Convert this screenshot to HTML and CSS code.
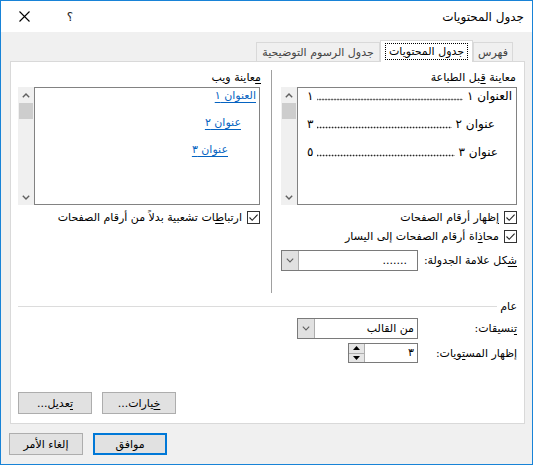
FILE: index.html
```html
<!DOCTYPE html>
<html lang="ar" dir="rtl">
<head>
<meta charset="utf-8">
<title>جدول المحتويات</title>
<link rel="stylesheet" href="styles.css">
</head>
<body>
<div class="window">
  <div class="titlebar">
    <div class="title">جدول المحتويات</div>
    <div class="tb-buttons">
      <div class="tb-btn help">؟</div>
      <div class="tb-btn close">
        <svg width="11" height="11" viewBox="0 0 11 11"><path d="M0.5 0.5 L10.5 10.5 M10.5 0.5 L0.5 10.5" stroke="#000" stroke-width="1.1" fill="none"/></svg>
      </div>
    </div>
  </div>
  <div class="client">
    <div class="tabs">
      <div class="tab tab-index">فهرس</div>
      <div class="tab tab-active"><span class="focus">جدول المحتويات</span></div>
      <div class="tab tab-figures">جدول الرسوم التوضيحية</div>
    </div>
    <div class="panel">
      <div class="columns">
        <div class="col col-print">
          <div class="label">معاينة <u>ق</u>بل الطباعة</div>
          <div class="preview">
            <div class="listbox print-list">
              <div class="toc-row l1"><span class="t">العنوان ١</span><span class="dots"></span><span class="n">١</span></div>
              <div class="toc-row l2"><span class="t">عنوان ٢</span><span class="dots"></span><span class="n">٣</span></div>
              <div class="toc-row l3"><span class="t">عنوان ٣</span><span class="dots"></span><span class="n">٥</span></div>
            </div>
            <div class="scrollbar">
              <div class="sb-arrow"><svg width="8" height="5" viewBox="0 0 8 5"><path d="M0.8 4.3 L4 1.1 L7.2 4.3" stroke="#606060" stroke-width="1.4" fill="none"/></svg></div>
              <div class="sb-thumb"></div>
              <div class="sb-track"></div>
              <div class="sb-arrow"><svg width="8" height="5" viewBox="0 0 8 5"><path d="M0.8 0.7 L4 3.9 L7.2 0.7" stroke="#606060" stroke-width="1.4" fill="none"/></svg></div>
            </div>
          </div>
          <div class="check first">
            <span class="box"><svg width="11" height="11" viewBox="0 0 11 11"><path d="M1.5 5.5 L4.2 8.3 L9.6 2.6" stroke="#222" stroke-width="1.1" fill="none"/></svg></span>
            <span class="check-text"><u>إ</u>ظهار أرقام الصفحات</span>
          </div>
          <div class="check">
            <span class="box"><svg width="11" height="11" viewBox="0 0 11 11"><path d="M1.5 5.5 L4.2 8.3 L9.6 2.6" stroke="#222" stroke-width="1.1" fill="none"/></svg></span>
            <span class="check-text">محا<u>ذ</u>اة أرقام الصفحات إلى اليسار</span>
          </div>
          <div class="leader-row">
            <span class="leader-label"><u>ش</u>كل علامة الجدولة:</span>
            <div class="combo combo-leader">
              <span class="combo-val leader-val">.......</span>
              <span class="combo-btn"><svg width="8" height="5" viewBox="0 0 8 5"><path d="M0.8 0.7 L4 3.9 L7.2 0.7" stroke="#606060" stroke-width="1.1" fill="none"/></svg></span>
            </div>
          </div>
        </div>
        <div class="col col-web">
          <div class="label web-label"><u>م</u>عاينة ويب</div>
          <div class="preview">
            <div class="listbox web-list">
              <div class="web-row w1"><span class="link">العنوان ١</span></div>
              <div class="web-row w2"><span class="link">عنوان ٢</span></div>
              <div class="web-row w3"><span class="link">عنوان ٣</span></div>
            </div>
            <div class="scrollbar">
              <div class="sb-arrow"><svg width="8" height="5" viewBox="0 0 8 5"><path d="M0.8 4.3 L4 1.1 L7.2 4.3" stroke="#606060" stroke-width="1.4" fill="none"/></svg></div>
              <div class="sb-thumb"></div>
              <div class="sb-track"></div>
              <div class="sb-arrow"><svg width="8" height="5" viewBox="0 0 8 5"><path d="M0.8 0.7 L4 3.9 L7.2 0.7" stroke="#606060" stroke-width="1.4" fill="none"/></svg></div>
            </div>
          </div>
          <div class="check first web-check">
            <span class="box"><svg width="11" height="11" viewBox="0 0 11 11"><path d="M1.5 5.5 L4.2 8.3 L9.6 2.6" stroke="#222" stroke-width="1.1" fill="none"/></svg></span>
            <span class="check-text">ارتبا<u>ط</u>ات تشعبية بدلاً من أرقام الصفحات</span>
          </div>
        </div>
      </div>
      <div class="general-head">
        <span class="general-label">عام</span>
        <span class="general-line"></span>
      </div>
      <div class="form-row row-formats">
        <span class="form-label"><u>ت</u>نسيقات:</span>
        <div class="combo combo-formats">
          <span class="combo-val">من القالب</span>
          <span class="combo-btn"><svg width="8" height="5" viewBox="0 0 8 5"><path d="M0.8 0.7 L4 3.9 L7.2 0.7" stroke="#606060" stroke-width="1.1" fill="none"/></svg></span>
        </div>
      </div>
      <div class="form-row row-levels">
        <span class="form-label">إظهار المس<u>ت</u>ويات:</span>
        <div class="spinner">
          <span class="spin-val">٣</span>
          <span class="spin-btns">
            <span class="spin-btn"><svg width="7" height="4" viewBox="0 0 7 4"><path d="M0 4 L3.5 0 L7 4 Z" fill="#000"/></svg></span>
            <span class="spin-btn"><svg width="7" height="4" viewBox="0 0 7 4"><path d="M0 0 L3.5 4 L7 0 Z" fill="#000"/></svg></span>
          </span>
        </div>
      </div>
      <div class="panel-buttons">
        <div class="btn"><span><u>خ</u>يارات...</span></div>
        <div class="btn"><span><u>ت</u>عديل...</span></div>
      </div>
    </div>
    <div class="footer">
      <div class="btn btn-default">موافق</div>
      <div class="btn">إلغاء الأمر</div>
    </div>
  </div>
</div>
</body>
</html>
```
FILE: styles.css
```css
html, body {
  margin: 0;
  padding: 0;
}
body {
  direction: rtl;
  font-family: "DejaVu Sans", sans-serif;
  font-size: 11px;
  color: #000;
  background: #f0f0f0;
}
u {
  text-decoration: underline;
  text-underline-offset: 2px;
}
.window {
  width: 533px;
  height: 465px;
  box-sizing: border-box;
  border: 1px solid #1883d7;
  background: #f0f0f0;
  display: flex;
  flex-direction: column;
}
.titlebar {
  height: 31px;
  background: #fff;
  display: flex;
  align-items: center;
  justify-content: space-between;
}
.title {
  padding-right: 8px;
  font-size: 12px;
}
.tb-buttons {
  display: flex;
  height: 100%;
}
.tb-btn {
  width: 46px;
  display: flex;
  align-items: center;
  justify-content: center;
}
.help {
  font-size: 12px;
  color: #222;
}
.client {
  flex: 1;
  display: flex;
  flex-direction: column;
  padding: 8px 7px 9px 9px;
  min-height: 0;
}
.tabs {
  height: 21px;
  display: flex;
  align-items: flex-end;
  padding-right: 12px;
}
.tab {
  box-sizing: border-box;
  height: 19px;
  border: 1px solid #d9d9d9;
  border-bottom: none;
  background: #f0f0f0;
  color: #444;
  display: flex;
  align-items: center;
  justify-content: center;
  white-space: nowrap;
}
.tab-index { width: 40px; }
.tab-figures { width: 124px; }
.tab-active {
  width: 93px;
  height: 22px;
  margin-bottom: -1px;
  background: #fff;
  color: #000;
  position: relative;
  z-index: 1;
}
.focus {
  border: 1px dotted #000;
  padding: 1px 3px 0;
  line-height: 14px;
}
.panel {
  flex: 1;
  background: #fff;
  border: 1px solid #d9d9d9;
  display: flex;
  flex-direction: column;
  padding: 8px 7px 9px 7px;
  min-height: 0;
}
.columns {
  display: flex;
  height: 223px;
  gap: 11px;
}
.col-print {
  width: 246px;
  box-sizing: border-box;
  border-left: 1px solid #a0a0a0;
  padding-left: 9px;
}
.col-web {
  width: 242px;
}
.label {
  height: 17px;
  line-height: 15px;
  padding-right: 1px;
}
.web-label {
  margin-right: -2px;
}
.preview {
  display: flex;
  height: 118px;
}
.listbox {
  flex: 1;
  border: 1px solid #828282;
  background: #fff;
  overflow: hidden;
}
.scrollbar {
  width: 16px;
  background: #f0f0f0;
  display: flex;
  flex-direction: column;
}
.sb-arrow {
  height: 16px;
  display: flex;
  align-items: center;
  justify-content: center;
}
.sb-thumb {
  height: 16px;
  margin: 0 1px;
  background: #cdcdcd;
}
.sb-track {
  flex: 1;
}
.print-list {
  font-size: 12px;
}
.toc-row {
  display: flex;
  line-height: 16px;
  padding-left: 9px;
  margin-bottom: 12px;
  white-space: nowrap;
}
.toc-row.l1 { padding-right: 4px; }
.toc-row.l2 { padding-right: 21px; }
.toc-row.l3 { padding-right: 18px; }
.dots {
  flex: 1;
  min-width: 0;
  margin: 0 4px 0 4px;
  background-image: radial-gradient(circle, #111 0.75px, transparent 1.1px);
  background-size: 3px 3px;
  background-repeat: repeat-x;
  background-position: right 0 bottom 3px;
}
.web-list {
  font-size: 11px;
}
.web-row {
  line-height: 15px;
  margin-bottom: 12px;
}
.web-row.w1 { padding-right: 3px; }
.web-row.w2 { padding-right: 18px; }
.web-row.w3 { padding-right: 31px; }
.link {
  color: #0563c1;
  text-decoration: underline;
  text-underline-offset: 3px;
}
.check {
  display: flex;
  align-items: center;
  height: 19px;
  gap: 5px;
}
.check.first {
  margin-top: 3px;
}
.box {
  width: 13px;
  height: 13px;
  box-sizing: border-box;
  border: 1px solid #333;
  background: #fff;
  display: flex;
  align-items: center;
  justify-content: center;
}
.leader-row {
  margin-top: 4px;
  height: 21px;
  display: flex;
  align-items: center;
  justify-content: space-between;
}
.combo {
  height: 21px;
  box-sizing: border-box;
  border: 1px solid #7a7a7a;
  background: #fff;
  display: flex;
}
.combo-leader { width: 137px; }
.combo-formats { width: 121px; }
.combo-val {
  flex: 1;
  line-height: 19px;
  padding-right: 3px;
}
.leader-val {
  padding-right: 10px;
}
.combo-btn {
  width: 16px;
  background: #e1e1e1;
  border-right: 1px solid #adadad;
  display: flex;
  align-items: center;
  justify-content: center;
}
.general-head {
  margin-top: 6px;
  height: 14px;
  display: flex;
  align-items: center;
}
.general-line {
  flex: 1;
  height: 1px;
  background: #dcdcdc;
  margin-right: 3px;
}
.form-row {
  display: flex;
  align-items: center;
}
.row-formats {
  margin-top: 5px;
  height: 21px;
}
.row-levels {
  margin-top: 4px;
  height: 20px;
}
.form-label {
  width: 99px;
}
.spinner {
  width: 70px;
  height: 20px;
  box-sizing: border-box;
  border: 1px solid #7a7a7a;
  background: #fff;
  display: flex;
}
.spin-val {
  flex: 1;
  line-height: 18px;
  padding-right: 3px;
}
.spin-btns {
  width: 15px;
  display: flex;
  flex-direction: column;
  border-right: 1px solid #adadad;
}
.spin-btn {
  flex: 1;
  background: #e5e5e5;
  display: flex;
  align-items: center;
  justify-content: center;
}
.spin-btn + .spin-btn {
  border-top: 1px solid #adadad;
}
.panel-buttons {
  margin-top: auto;
  display: flex;
  justify-content: flex-end;
  gap: 10px;
}
.btn {
  width: 74px;
  height: 22px;
  box-sizing: border-box;
  border: 1px solid #adadad;
  background: #e1e1e1;
  display: flex;
  align-items: center;
  justify-content: center;
  white-space: nowrap;
}
.btn-default {
  border: 2px solid #0078d7;
}
.footer {
  margin-top: 9px;
  margin-left: -1px;
  display: flex;
  justify-content: flex-end;
  gap: 10px;
}
```
